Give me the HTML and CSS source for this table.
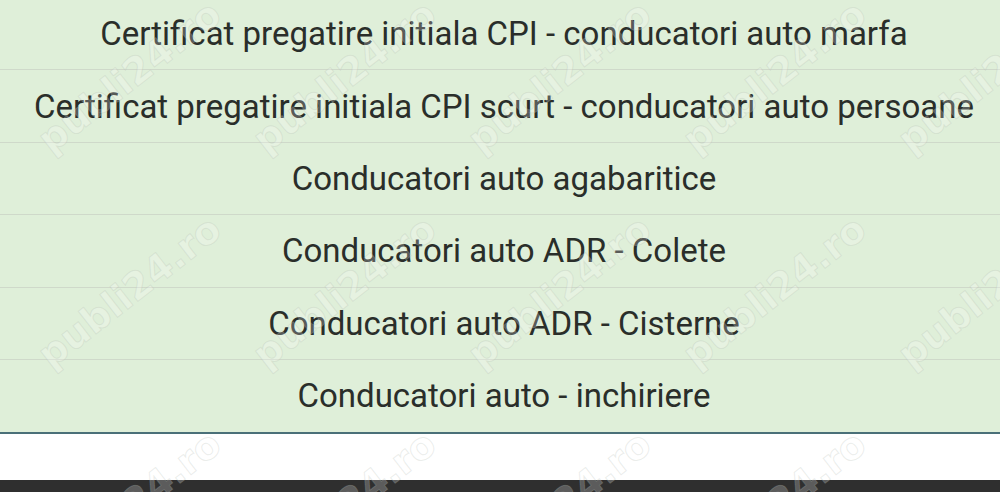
FILE: index.html
```html
<!DOCTYPE html>
<html lang="ro">
<head>
<meta charset="utf-8">
<title>Cursuri</title>
<link rel="stylesheet" href="styles.css">
</head>
<body>
<div class="page">
  <ul class="list">
    <li class="row">Certificat pregatire initiala CPI - conducatori auto marfa</li>
    <li class="row">Certificat pregatire initiala CPI scurt - conducatori auto persoane</li>
    <li class="row">Conducatori auto agabaritice</li>
    <li class="row">Conducatori auto ADR - Colete</li>
    <li class="row">Conducatori auto ADR - Cisterne</li>
    <li class="row">Conducatori auto - inchiriere</li>
  </ul>
  <div class="spacer"></div>
  <div class="bottom-bar"></div>
  <div class="watermarks" aria-hidden="true">
    <span class="wm" style="left:55px;top:120px">publi24.ro</span>
    <span class="wm" style="left:270px;top:120px">publi24.ro</span>
    <span class="wm" style="left:485px;top:120px">publi24.ro</span>
    <span class="wm" style="left:700px;top:120px">publi24.ro</span>
    <span class="wm" style="left:915px;top:120px">publi24.ro</span>
    <span class="wm" style="left:55px;top:335px">publi24.ro</span>
    <span class="wm" style="left:270px;top:335px">publi24.ro</span>
    <span class="wm" style="left:485px;top:335px">publi24.ro</span>
    <span class="wm" style="left:700px;top:335px">publi24.ro</span>
    <span class="wm" style="left:915px;top:335px">publi24.ro</span>
    <span class="wm" style="left:55px;top:550px">publi24.ro</span>
    <span class="wm" style="left:270px;top:550px">publi24.ro</span>
    <span class="wm" style="left:485px;top:550px">publi24.ro</span>
    <span class="wm" style="left:700px;top:550px">publi24.ro</span>
  </div>
</div>
</body>
</html>
```

FILE: styles.css
```css
html, body {
  margin: 0;
  padding: 0;
  background: #ffffff;
}

.page {
  position: relative;
  width: 1000px;
  height: 492px;
  overflow: hidden;
  font-family: Roboto, "Liberation Sans", sans-serif;
  display: flex;
  flex-direction: column;
}

.list {
  list-style: none;
  margin: -2px 0 0 0;
  padding: 0;
  background: #dfefd9;
  border-bottom: 2px solid #4a7078;
  box-shadow: 0 1px 0 #cfe6f0;
}

.row {
  height: 71.4px;
  display: flex;
  align-items: center;
  justify-content: center;
  padding-left: 8px;
  font-size: 33px;
  color: #2a2e2a;
  border-bottom: 1px solid #cfd9ca;
  white-space: nowrap;
}

.row:last-child {
  border-bottom: none;
  height: 72px;
}

.spacer {
  flex: 1;
  background: #ffffff;
}

.bottom-bar {
  height: 12px;
  background: #2f2f2f;
}

.watermarks {
  position: absolute;
  inset: 0;
  pointer-events: none;
}

.wm {
  position: absolute;
  line-height: 40px;
  font-family: "DejaVu Sans", sans-serif;
  font-weight: bold;
  font-size: 38px;
  color: rgba(255, 255, 255, 0.22);
  -webkit-text-stroke: 1px rgba(175, 185, 175, 0.26);
  transform: rotate(-38deg);
  transform-origin: 0 100%;
  white-space: nowrap;
}
```
